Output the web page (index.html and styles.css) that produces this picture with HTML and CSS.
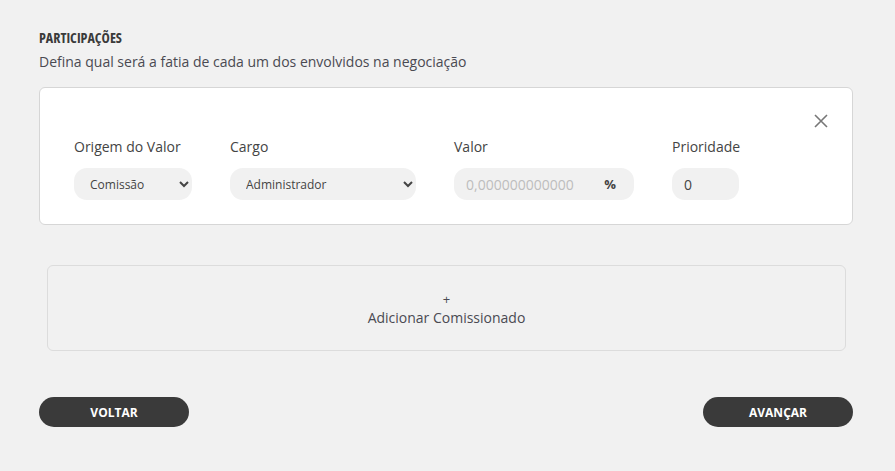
FILE: index.html
```html
<!DOCTYPE html>
<html lang="pt-br">

<head>
    <meta charset="UTF-8">
    <meta name="viewport" content="width=device-width, initial-scale=1.0">
    <title>Participações</title>
    <link rel="stylesheet" href="styles.css">
</head>

<body>
    <div class="page">
        <!-- cabeçalho -->
        <h2 class="title">PARTICIPAÇÕES</h2>
        <p class="subtitle">Defina qual será a fatia de cada um dos envolvidos na negociação</p>

        <!-- participante -->
        <div class="card">
            <button class="close" aria-label="Remover">
                <svg width="16" height="16" viewBox="0 0 16 16">
                    <path d="M2 2 L14 14 M14 2 L2 14" stroke="#777" stroke-width="1.6" fill="none" />
                </svg>
            </button>
            <div class="fields">
                <div class="field">
                    <label>Origem do Valor</label>
                    <select class="input sel-origem">
                        <option>Comissão</option>
                    </select>
                </div>
                <div class="field">
                    <label>Cargo</label>
                    <select class="input sel-cargo">
                        <option>Administrador</option>
                    </select>
                </div>
                <div class="field">
                    <label>Valor</label>
                    <div class="input valor">
                        <input type="text" placeholder="0,000000000000">
                        <span>%</span>
                    </div>
                </div>
                <div class="field">
                    <label>Prioridade</label>
                    <input class="input prioridade" type="text" value="0">
                </div>
            </div>
        </div>

        <!-- adicionar -->
        <div class="add">
            <span class="plus">+</span>
            <span>Adicionar Comissionado</span>
        </div>

        <!-- botões -->
        <div class="actions">
            <button class="btn">VOLTAR</button>
            <button class="btn">AVANÇAR</button>
        </div>
    </div>
</body>

</html>
```

FILE: styles.css
```css
* {
    padding: 0;
    margin: 0;
    box-sizing: border-box;
}

body {
    background-color: #f1f1f1;
    font-family: "Open Sans", "Liberation Sans", sans-serif;
    color: #444;
}

.page {
    padding: 28px 42px 0 39px;
}

.title {
    font-size: 14px;
    font-weight: 700;
    font-stretch: condensed;
    color: #3a3a3a;
    line-height: 19px;
}

.subtitle {
    margin-top: 5px;
    font-size: 14px;
    line-height: 20px;
    color: #4a4a52;
}

.card {
    position: relative;
    margin-top: 15px;
    background-color: #fff;
    border: 1px solid #d6d6d6;
    border-radius: 6px;
    padding: 49px 34px 24px;
}

.close {
    position: absolute;
    top: 25px;
    right: 23px;
    border: 0;
    background: none;
    cursor: pointer;
    display: flex;
}

.fields {
    display: flex;
    gap: 38px;
}

.field {
    display: flex;
    flex-direction: column;
}

.field label {
    font-size: 14px;
    line-height: 20px;
    color: #444;
    margin-bottom: 11px;
}

.input {
    height: 32px;
    border: 0;
    border-radius: 13px;
    background-color: #f1f1f1;
    font-family: "Open Sans", "Liberation Sans", sans-serif;
    font-size: 12px;
    color: #444;
    outline: none;
}

select.input {
    padding: 0 6px 0 12px;
}

.sel-origem {
    width: 118px;
}

.sel-cargo {
    width: 186px;
}

.valor {
    width: 180px;
    display: flex;
    align-items: center;
    padding: 0 18px 0 12px;
}

.valor input {
    flex: 1;
    min-width: 0;
    border: 0;
    background: none;
    outline: none;
    font-family: "Open Sans", "Liberation Sans", sans-serif;
    font-size: 14px;
    color: #444;
}

.valor input::placeholder {
    color: #bdbdbd;
}

.valor span {
    font-size: 13px;
    font-weight: 700;
    color: #444;
}

.prioridade {
    width: 67px;
    padding: 0 12px;
    font-size: 14px;
}

.add {
    margin: 40px 7px 0 8px;
    height: 86px;
    border: 1px solid #dcdcdc;
    border-radius: 6px;
    display: flex;
    flex-direction: column;
    align-items: center;
    justify-content: center;
    font-size: 14px;
    color: #4a4a52;
    line-height: 19px;
}

.add .plus {
    font-size: 13px;
    line-height: 18px;
}

.actions {
    margin-top: 46px;
    display: flex;
    justify-content: space-between;
}

.btn {
    width: 150px;
    height: 30px;
    border: 0;
    border-radius: 15px;
    background-color: #3a3a3a;
    color: #fff;
    font-family: "Open Sans", "Liberation Sans", sans-serif;
    font-size: 12px;
    font-weight: 700;
    cursor: pointer;
}
```
